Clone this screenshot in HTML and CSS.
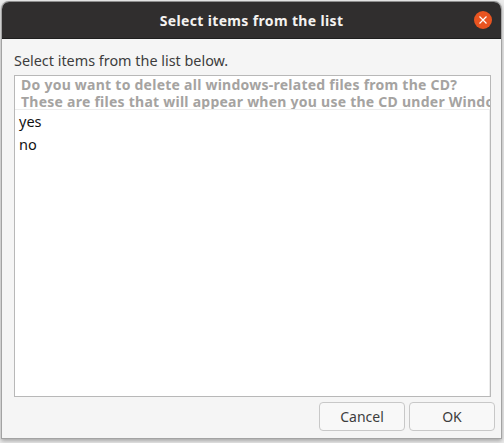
FILE: index.html
```html
<!DOCTYPE html>
<html lang="en">
<head>
<meta charset="utf-8">
<title>Select items from the list</title>
<link rel="stylesheet" href="styles.css">
</head>
<body>
<div class="window">
  <header class="titlebar">
    <span class="title">Select items from the list</span>
    <button class="close" aria-label="Close">
      <svg viewBox="0 0 18 18" width="18" height="18"><circle cx="9" cy="9" r="9" fill="#e95420"/><path d="M5.5 5.5l7 7M12.5 5.5l-7 7" stroke="#fff" stroke-width="1.2" fill="none"/></svg>
    </button>
  </header>
  <main class="content">
    <p class="prompt">Select items from the list below.</p>
    <div class="list">
      <div class="list-head">
        <div class="head-line">Do you want to delete all windows-related files from the CD?</div>
        <div class="head-line">These are files that will appear when you use the CD under Windows.</div>
      </div>
      <div class="rows">
        <div class="row">yes</div>
        <div class="row">no</div>
      </div>
    </div>
    <div class="actions">
      <button class="btn">Cancel</button>
      <button class="btn">OK</button>
    </div>
  </main>
</div>
</body>
</html>
```
FILE: styles.css
```css
* { box-sizing: border-box; }
html, body { margin: 0; height: 100%; }
body {
  background: #ececec;
  padding: 1px 2px 4px 1px;
  font-family: "Noto Sans", "Open Sans", sans-serif;
  overflow: hidden;
}
.window {
  height: 438px;
  display: flex;
  flex-direction: column;
  border: 1px solid #a3a3a3;
  border-top-color: #8f8f8f;
  border-radius: 8px 8px 0 0;
  box-shadow: 0 2px 4px rgba(0,0,0,.3);
  overflow: hidden;
  background: #f5f5f5;
}
.titlebar {
  height: 37px;
  flex: none;
  background: #302e2e;
  border-bottom: 1px solid #1e1e1e;
  display: flex;
  align-items: center;
  justify-content: center;
  position: relative;
}
.title {
  color: #f4f2f0;
  font-size: 14px;
  font-weight: 700;
  letter-spacing: .35px;
}
.close {
  position: absolute;
  right: 9px;
  top: 9px;
  width: 18px;
  height: 18px;
  padding: 0;
  border: 0;
  background: none;
  display: block;
}
.close svg { display: block; }
.content {
  flex: 1;
  min-height: 0;
  display: flex;
  flex-direction: column;
  padding: 12px 6px 7px 12px;
}
.prompt {
  margin: 0 0 5px;
  height: 19px;
  line-height: 19px;
  font-size: 14.4px;
  color: #3d3d3d;
}
.list {
  flex: none;
  width: 477px;
  height: 322px;
  border: 1px solid #b8b8b8;
  background: #fff;
  overflow: hidden;
}
.list-head {
  height: 34px;
  padding: 0 0 0 6px;
  border-bottom: 1px solid #ececec;
  color: #a5a3a1;
  font-size: 14px;
  font-weight: 700;
  letter-spacing: .25px;
  line-height: 17px;
  white-space: nowrap;
  overflow: hidden;
}
.rows {
  height: 286px;
  border-right: 1px solid #ececec;
}
.row {
  height: 23px;
  line-height: 23px;
  padding-left: 4px;
  font-size: 14.5px;
  color: #111;
}
.actions {
  display: flex;
  justify-content: flex-end;
  gap: 4px;
  margin-top: 5px;
}
.btn {
  width: 86px;
  height: 29px;
  padding: 0;
  border: 1px solid #c8c8c8;
  border-radius: 4px;
  background: #f8f8f8;
  color: #3d3d3d;
  font: 14px "Noto Sans", "Open Sans", sans-serif;
}
```
